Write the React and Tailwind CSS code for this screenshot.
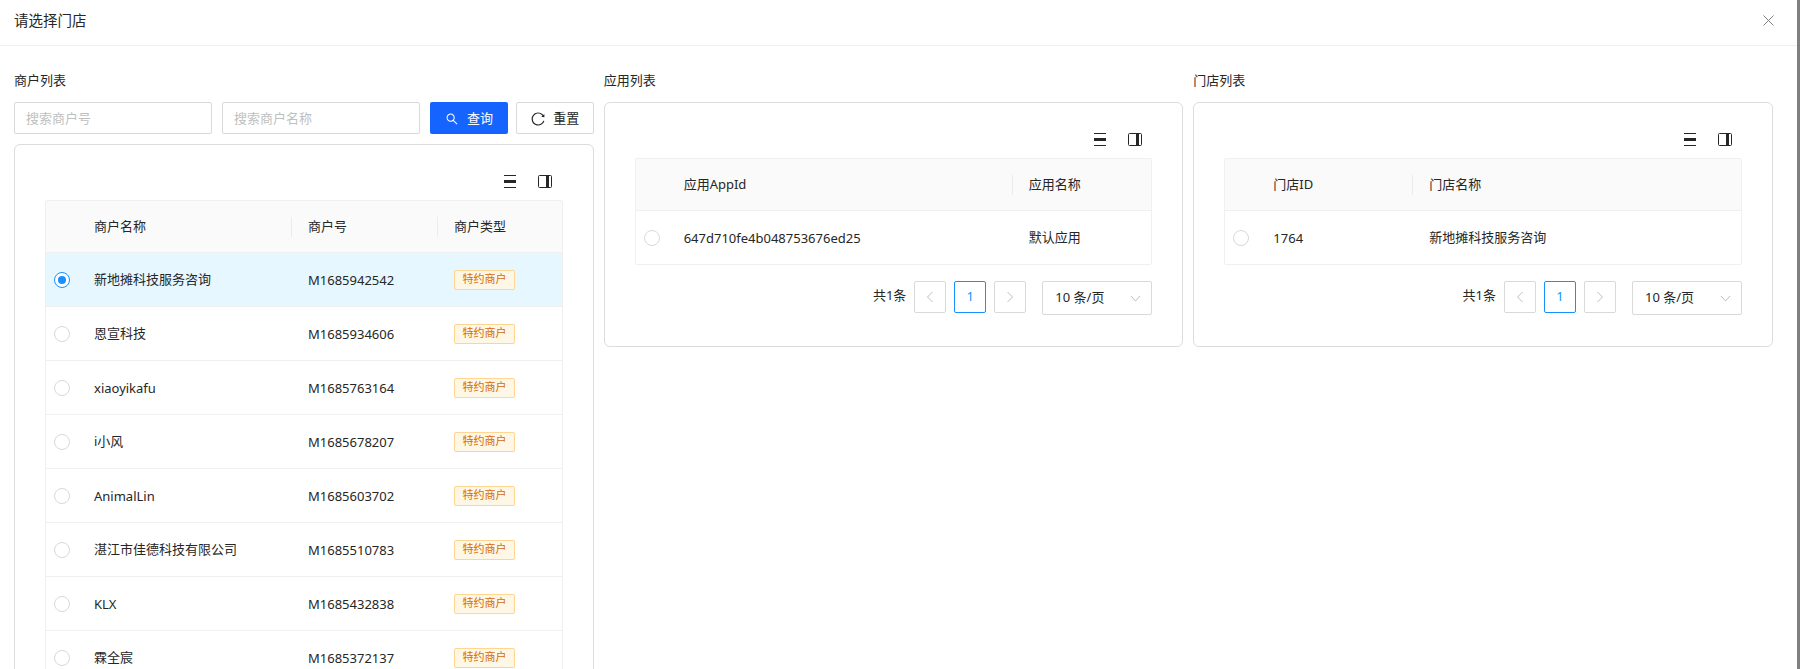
import React from "react";

function Radio({ checked }) {
  return (
    <span className={"flex h-[16px] w-[16px] items-center justify-center rounded-full border bg-white " + (checked ? "border-[#1890ff]" : "border-[#d9d9d9]")}>
      {checked ? <span className="h-[8px] w-[8px] rounded-full bg-[#1890ff]" /> : null}
    </span>
  );
}

function DensityIcon() {
  return (
    <svg width="12" height="13" viewBox="0 0 12 13" className="block">
      <rect x="0" y="0" width="12" height="1" fill="#262626" />
      <rect x="0" y="5" width="12" height="3" fill="#262626" />
      <rect x="0" y="12" width="12" height="1" fill="#262626" />
    </svg>
  );
}

function ColumnIcon() {
  return (
    <svg width="14" height="13" viewBox="0 0 14 13" className="block">
      <rect x="0.5" y="0.5" width="13" height="12" rx="1" fill="none" stroke="#262626" />
      <rect x="8" y="1" width="3" height="11" fill="#262626" />
    </svg>
  );
}

function Toolbar() {
  return (
    <div className="flex h-[25px] items-start justify-end gap-[22px] pr-[10.5px]">
      <DensityIcon />
      <ColumnIcon />
    </div>
  );
}

function HeadCell({ children, divider }) {
  return (
    <div className="flex h-full items-center justify-between pl-[16px]">
      <span>{children}</span>
      {divider ? <span className="h-[20px] w-px bg-[#ececec]" /> : null}
    </div>
  );
}

function Tag() {
  return (
    <span className="flex h-[20px] w-[61px] items-center justify-center rounded-[2px] border border-[#ffd591] bg-[#fff7e6] text-[11px] text-[#d46b08]">
      特约商户
    </span>
  );
}

function Pagination() {
  const box = "flex h-[32px] w-[32px] items-center justify-center rounded-[2px] border";
  return (
    <div className="mt-[16px] flex h-[35px] items-start justify-end">
      <span className="mr-[8px] leading-[28px]">共1条</span>
      <span className={box + " border-[#d9d9d9]"}>
        <svg width="8" height="12" viewBox="0 0 8 12"><path d="M6.5 1 1.5 6l5 5" fill="none" stroke="#bfbfbf" /></svg>
      </span>
      <span className={box + " ml-[8px] border-[#1890ff] text-[#1890ff]"}>1</span>
      <span className={box + " ml-[8px] border-[#d9d9d9]"}>
        <svg width="8" height="12" viewBox="0 0 8 12"><path d="M1.5 1l5 5-5 5" fill="none" stroke="#bfbfbf" /></svg>
      </span>
      <span className="ml-[16px] flex h-[34px] w-[110px] items-center justify-between rounded-[2px] border border-[#d9d9d9] pl-[12px] pr-[10px]">
        <span>10 条/页</span>
        <svg width="11" height="7" viewBox="0 0 11 7"><path d="M1 1l4.5 5L10 1" fill="none" stroke="#bfbfbf" /></svg>
      </span>
    </div>
  );
}

const merchants = [
  ["新地摊科技服务咨询", "M1685942542", true],
  ["恩宣科技", "M1685934606"],
  ["xiaoyikafu", "M1685763164", false, true],
  ["i小风", "M1685678207"],
  ["AnimalLin", "M1685603702", false, true],
  ["湛江市佳德科技有限公司", "M1685510783"],
  ["KLX", "M1685432838", false, true],
  ["霖全宸", "M1685372137"],
];

function Label({ children }) {
  return <div className="mb-[12px] h-[20px] leading-[20px]">{children}</div>;
}

function Card({ children }) {
  return <div className="rounded-[6px] border border-[#dcdcdc] bg-white px-[30px] pt-[30px]">{children}</div>;
}

function TwoColTable({ grid, headA, headB, cellA, cellB, latinB }) {
  return (
    <div className="rounded-[2px] border border-[#f0f0f0]">
      <div className={"grid h-[52px] border-b border-[#f0f0f0] bg-[#fafafa] " + grid}>
        <div />
        <HeadCell divider>{headA}</HeadCell>
        <HeadCell>{headB}</HeadCell>
      </div>
      <div className={"grid h-[53px] items-center " + grid}>
        <div className="flex justify-center"><Radio /></div>
        <div className="pl-[16px] pt-[2px]">{cellA}</div>
        <div className="pl-[16px]">{cellB}</div>
      </div>
    </div>
  );
}

export default function App() {
  return (
    <div className="flex h-[669px] w-full overflow-hidden bg-white font-['Noto_Sans','Noto_Sans_CJK_SC',sans-serif] text-[13px] text-[#262626]">
      <div className="min-w-0 flex-1">
        <header className="flex h-[46px] items-center justify-between border-b border-[#f0f0f0] pb-[5px] pl-[14px] pr-[23px]">
          <span className="text-[14.5px] leading-[20px]">请选择门店</span>
          <svg width="11" height="11" viewBox="0 0 11 11">
            <path d="M0.5 0.5l10 10M10.5 0.5l-10 10" fill="none" stroke="#808080" strokeWidth="1" />
          </svg>
        </header>
        <div className="grid grid-cols-3 items-start gap-x-[10px] pl-[14px] pr-[24px] pt-[24px]">
          <section>
            <Label>商户列表</Label>
            <div className="mb-[10px] flex h-[32px]">
              <input readOnly placeholder="搜索商户号" className="h-[32px] w-[198px] rounded-[2px] border border-[#d9d9d9] px-[11px] outline-none placeholder:text-[#bfbfbf]" />
              <input readOnly placeholder="搜索商户名称" className="ml-[10px] h-[32px] w-[198px] rounded-[2px] border border-[#d9d9d9] px-[11px] outline-none placeholder:text-[#bfbfbf]" />
              <button className="ml-[10px] flex h-[32px] w-[78px] items-center justify-center gap-[8px] rounded-[2px] bg-[#1664ff] pt-[2px] text-white">
                <svg width="14" height="14" viewBox="0 0 1024 1024" fill="currentColor"><path d="M909.6 854.5L649.9 594.8C690.2 542.7 712 479 712 412c0-80.2-31.3-155.4-87.9-212.1-56.6-56.7-132-87.9-212.1-87.9s-155.5 31.3-212.1 87.9C143.2 256.5 112 331.8 112 412c0 80.1 31.3 155.5 87.9 212.1C256.5 680.8 331.8 712 412 712c67 0 130.6-21.8 182.7-62l259.7 259.6a8.2 8.2 0 0 0 11.6 0l43.6-43.5a8.2 8.2 0 0 0 0-11.6zM570.4 570.4C528 612.7 471.8 636 412 636s-116-23.3-158.4-65.6C211.3 528 188 471.8 188 412s23.3-116.1 65.6-158.4C296 211.3 352.2 188 412 188s116.1 23.2 158.4 65.6S636 352.2 636 412s-23.3 116.1-65.6 158.4z" /></svg>
                查询
              </button>
              <button className="ml-[8px] flex h-[32px] flex-1 items-center justify-center gap-[7px] rounded-[2px] border border-[#d9d9d9] bg-white pt-[2px]">
                <svg width="16" height="16" viewBox="0 0 1024 1024" fill="currentColor"><path d="M909.1 209.3l-56.4 44.1C775.8 155.1 656.2 92 521.9 92 290 92 102.3 279.5 102 511.5 101.7 743.7 289.8 932 521.9 932c181.3 0 335.8-115 394.6-276.1 1.5-4.2-.7-8.9-4.9-10.3l-56.7-19.5a8 8 0 0 0-10.1 4.8c-1.8 5-3.8 10-5.9 14.9-17.3 41-42.1 77.8-73.7 109.4A344.77 344.77 0 0 1 655.9 829c-42.3 17.9-87.4 27-133.8 27-46.5 0-91.5-9.1-133.8-27A341.5 341.5 0 0 1 279 755.2a342.16 342.16 0 0 1-73.7-109.4c-17.9-42.4-27-87.4-27-133.9s9.1-91.5 27-133.9c17.3-41 42.1-77.8 73.7-109.4 31.6-31.6 68.4-56.4 109.3-73.8 42.3-17.9 87.4-27 133.8-27 46.5 0 91.5 9.1 133.8 27a341.5 341.5 0 0 1 109.3 73.8c9.9 9.9 19.2 20.4 27.8 31.4l-60.2 47a8 8 0 0 0 3 14.1l175.6 43c5 1.2 9.9-2.6 9.9-7.7l.8-180.9c-.1-6.6-7.8-10.3-13-6.2z" /></svg>
                重置
              </button>
            </div>
            <Card>
              <Toolbar />
              <div className="rounded-[2px] border border-[#f0f0f0]">
                <div className="grid h-[52px] grid-cols-[32px_214px_146px_1fr] border-b border-[#f0f0f0] bg-[#fafafa]">
                  <div />
                  <HeadCell divider>商户名称</HeadCell>
                  <HeadCell divider>商户号</HeadCell>
                  <HeadCell>商户类型</HeadCell>
                </div>
                {merchants.map(([name, id, checked, latin]) => (
                  <div key={id} className={"grid h-[54px] grid-cols-[32px_214px_146px_1fr] items-center border-b border-[#f0f0f0] " + (checked ? "bg-[#e6f7ff]" : "")}>
                    <div className="flex justify-center"><Radio checked={checked} /></div>
                    <div className={"pl-[16px] " + (latin ? "pt-[2px]" : "")}>{name}</div>
                    <div className="pl-[16px] pt-[2px]">{id}</div>
                    <div className="pl-[16px]"><Tag /></div>
                  </div>
                ))}
              </div>
            </Card>
          </section>
          <section>
            <Label>应用列表</Label>
            <Card>
              <Toolbar />
              <TwoColTable grid="grid-cols-[32px_345px_1fr]" headA="应用AppId" headB="应用名称" cellA="647d710fe4b048753676ed25" cellB="默认应用" />
              <Pagination />
              <div className="h-[30px]" />
            </Card>
          </section>
          <section>
            <Label>门店列表</Label>
            <Card>
              <Toolbar />
              <TwoColTable grid="grid-cols-[32px_156px_1fr]" headA="门店ID" headB="门店名称" cellA="1764" cellB="新地摊科技服务咨询" />
              <Pagination />
              <div className="h-[30px]" />
            </Card>
          </section>
        </div>
      </div>
      <div className="h-full w-[3px] shrink-0 bg-[#808080]" />
    </div>
  );
}
